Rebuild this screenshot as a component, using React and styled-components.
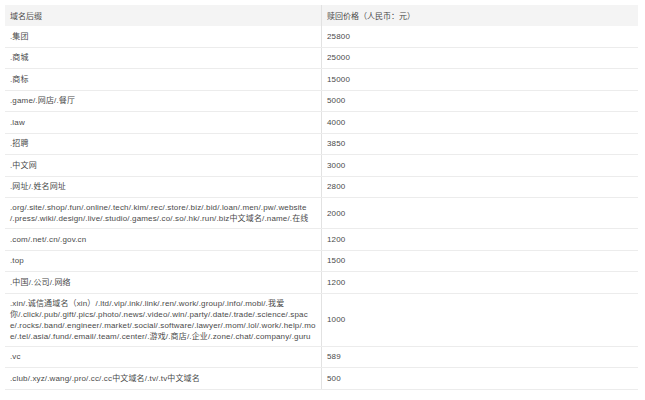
import React from "react";
import styled, { createGlobalStyle } from "styled-components";

const G = createGlobalStyle`
  body { margin: 0; background: #fff; font-family: "Liberation Sans", "Noto Sans CJK SC", sans-serif; }
`;
const Wrap = styled.div`padding: 5px 7px 0 5px;`;
const Table = styled.table`
  width: 100%; border-collapse: collapse; font-size: 8px; color: #4a4a4a;
`;
const Th = styled.th`
  background: #f4f4f4; font-weight: normal; text-align: left; height: 21px;
  padding: 0 5px; border-right: 1px solid ${p => (p.$last ? "transparent" : "#e2e2e2")};
  width: ${p => p.$w || "auto"};
`;
const Td = styled.td`
  padding: ${p => (p.$multi ? "4px 5px" : "0 5px")}; height: ${p => (p.$multi ? "auto" : "20.5px")};
  line-height: 11px; border-bottom: 1px solid #ececec; letter-spacing: 0.15px;
  border-right: ${p => (p.$first ? "1px solid #e2e2e2" : "none")}; vertical-align: middle;
`;
const Line = styled.span`display: block; white-space: nowrap;`;

const rows = [
  [".集团", "25800"], [".商城", "25000"], [".商标", "15000"],
  [".game/.网店/.餐厅", "5000"], [".law", "4000"], [".招聘", "3850"],
  [".中文网", "3000"], [".网址/.姓名网址", "2800"],
  [[".org/.site/.shop/.fun/.online/.tech/.kim/.rec/.store/.biz/.bid/.loan/.men/.pw/.website", "/.press/.wiki/.design/.live/.studio/.games/.co/.so/.hk/.run/.biz中文域名/.name/.在线"], "2000"],
  [".com/.net/.cn/.gov.cn", "1200"], [".top", "1500"], [".中国/.公司/.网络", "1200"],
  [[".xin/.诚信通域名（xin）/.ltd/.vip/.ink/.link/.ren/.work/.group/.info/.mobi/.我爱", "你/.click/.pub/.gift/.pics/.photo/.news/.video/.win/.party/.date/.trade/.science/.spac", "e/.rocks/.band/.engineer/.market/.social/.software/.lawyer/.mom/.lol/.work/.help/.mo", "e/.tel/.asia/.fund/.email/.team/.center/.游戏/.商店/.企业/.zone/.chat/.company/.guru"], "1000"],
  [".vc", "589"], [".club/.xyz/.wang/.pro/.cc/.cc中文域名/.tv/.tv中文域名", "500"],
];

export default function App() {
  return (
    <Wrap>
      <G />
      <Table>
        <thead><tr><Th $w="306px">域名后缀</Th><Th $last>赎回价格（人民币：元）</Th></tr></thead>
        <tbody>
          {rows.map(([a, b], i) => {
            const multi = Array.isArray(a);
            return (
              <tr key={i}>
                <Td $first $multi={multi}>{multi ? a.map((l, j) => <Line key={j}>{l}</Line>) : a}</Td>
                <Td>{b}</Td>
              </tr>
            );
          })}
        </tbody>
      </Table>
    </Wrap>
  );
}
